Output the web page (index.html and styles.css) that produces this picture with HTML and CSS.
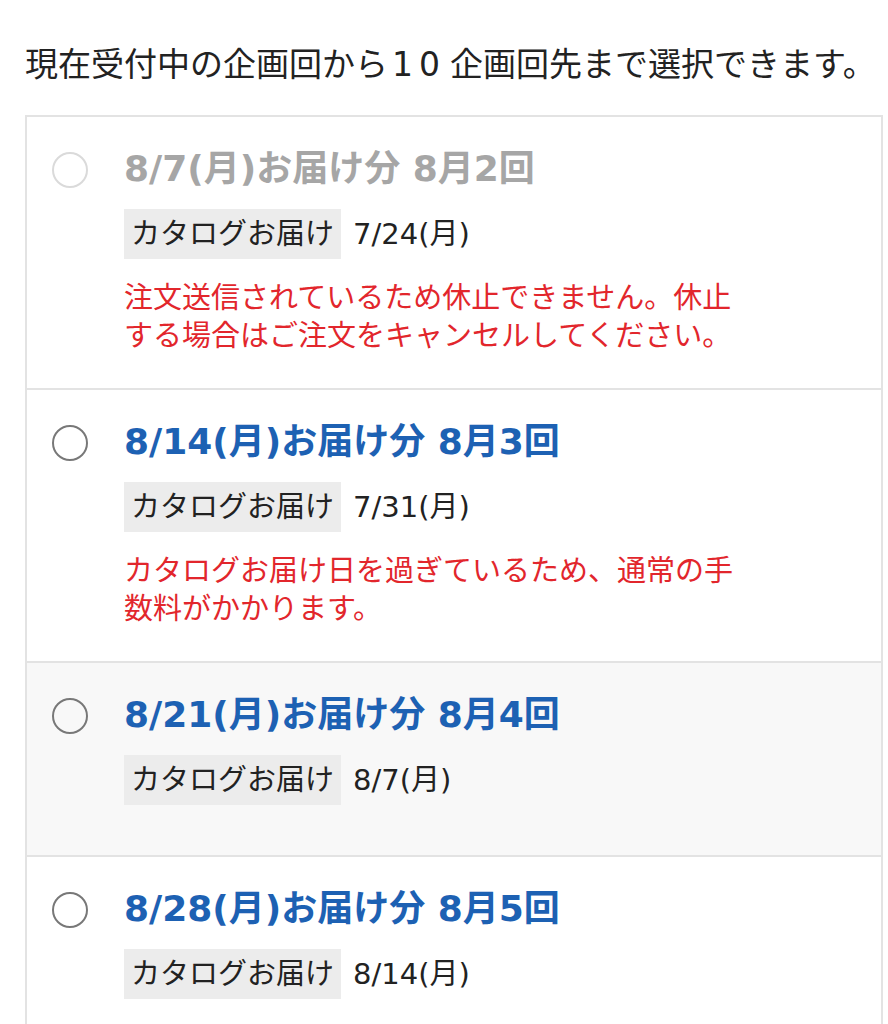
FILE: index.html
```html
<!DOCTYPE html>
<html lang="ja">

<head>
    <meta charset="UTF-8">
    <meta name="viewport" content="width=device-width, initial-scale=1.0">
    <title>お届け回の選択</title>
    <link rel="stylesheet" href="styles.css">
</head>

<body>
    <p class="lead">現在受付中の企画回から<span class="lead-num">10</span>企画回先まで選択できます。</p>

    <ul class="plan-list">
        <li class="plan-item is-disabled">
            <label class="plan-label">
                <input class="plan-radio" type="radio" name="plan" disabled>
                <div class="plan-body">
                    <div class="plan-title">8/7(月)お届け分 8月2回</div>
                    <div class="plan-meta">
                        <span class="plan-tag">カタログお届け</span>
                        <span class="plan-date">7/24(月)</span>
                    </div>
                    <p class="plan-note">注文送信されているため休止できません。休止する場合はご注文をキャンセルしてください。</p>
                </div>
            </label>
        </li>
        <li class="plan-item">
            <label class="plan-label">
                <input class="plan-radio" type="radio" name="plan">
                <div class="plan-body">
                    <div class="plan-title">8/14(月)お届け分 8月3回</div>
                    <div class="plan-meta">
                        <span class="plan-tag">カタログお届け</span>
                        <span class="plan-date">7/31(月)</span>
                    </div>
                    <p class="plan-note">カタログお届け日を過ぎているため、通常の手数料がかかります。</p>
                </div>
            </label>
        </li>
        <li class="plan-item is-hover">
            <label class="plan-label">
                <input class="plan-radio" type="radio" name="plan">
                <div class="plan-body">
                    <div class="plan-title">8/21(月)お届け分 8月4回</div>
                    <div class="plan-meta">
                        <span class="plan-tag">カタログお届け</span>
                        <span class="plan-date">8/7(月)</span>
                    </div>
                </div>
            </label>
        </li>
        <li class="plan-item">
            <label class="plan-label">
                <input class="plan-radio" type="radio" name="plan">
                <div class="plan-body">
                    <div class="plan-title">8/28(月)お届け分 8月5回</div>
                    <div class="plan-meta">
                        <span class="plan-tag">カタログお届け</span>
                        <span class="plan-date">8/14(月)</span>
                    </div>
                </div>
            </label>
        </li>
    </ul>
</body>

</html>
```

FILE: styles.css
```css
body {
    margin: 0;
    padding: 0 0 0 25px;
    background-color: #ffffff;
    color: #222222;
    font-family: 'DejaVu Sans', 'Noto Sans CJK JP', sans-serif;
}

.lead {
    margin: 0 0 27px 0;
    padding-top: 42px;
    font-size: 33px;
    line-height: 46px;
    color: #222222;
    white-space: nowrap;
}

.lead-num {
    padding: 0 4px;
    letter-spacing: 6px;
}

.plan-list {
    list-style: none;
    margin: 0 5px 0 0;
    padding: 0;
    border: 2px solid #e3e3e3;
}

.plan-item {
    border-bottom: 2px solid #e3e3e3;
    background-color: #ffffff;
}

.plan-item.is-hover {
    background-color: #f8f8f8;
}

.plan-label {
    display: flex;
    align-items: flex-start;
    gap: 36px;
    padding: 29px 20px 33px 25px;
    cursor: pointer;
}

.plan-radio {
    appearance: none;
    -webkit-appearance: none;
    flex: none;
    box-sizing: border-box;
    width: 36px;
    height: 36px;
    margin: 6px 0 0 0;
    border: 2.5px solid #787878;
    border-radius: 50%;
    background-color: transparent;
}

.plan-radio:checked {
    box-shadow: inset 0 0 0 7px #ffffff;
    background-color: #1c5fb0;
    border-color: #1c5fb0;
}

.plan-body {
    display: flex;
    flex-direction: column;
    align-items: flex-start;
}

.plan-title {
    font-size: 36px;
    line-height: 46px;
    font-weight: bold;
    color: #1d61b3;
    white-space: nowrap;
}

.plan-meta {
    display: flex;
    align-items: center;
    margin-top: 17px;
    margin-bottom: 17px;
    font-size: 29px;
    line-height: 50px;
}

.plan-tag {
    padding: 0 7px;
    background-color: #ececec;
    color: #222222;
}

.plan-date {
    margin-left: 12px;
    color: #222222;
}

.plan-note {
    width: 620px;
    margin: 3px 0 0 0;
    font-size: 29px;
    line-height: 38px;
    color: #e2262c;
}

.is-disabled .plan-label {
    cursor: default;
}

.is-disabled .plan-radio {
    border-color: #dadada;
}

.is-disabled .plan-title {
    color: #a6a6a6;
}
```
